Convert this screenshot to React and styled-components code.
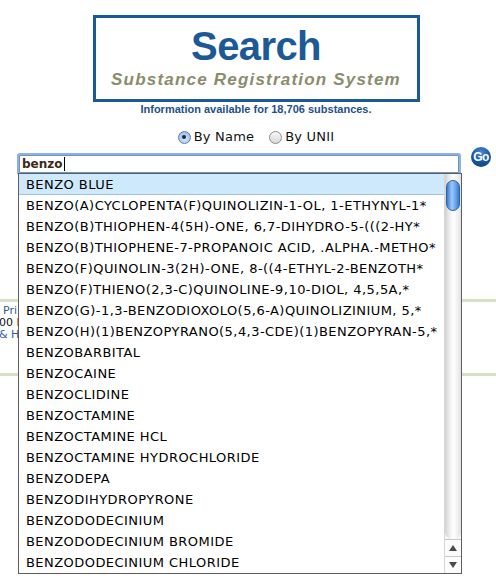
import React from "react";
import styled, { createGlobalStyle } from "styled-components";

const Global = createGlobalStyle`
  html, body { margin: 0; padding: 0; background: #ffffff; overflow: hidden; }
  body { font-family: "DejaVu Sans", Verdana, sans-serif; }
`;

const Page = styled.div`
  position: relative;
  width: 496px;
  height: 584px;
  overflow: hidden;
`;

const Center = styled.div`
  width: 512px;
  display: flex;
  flex-direction: column;
  align-items: center;
`;

const Banner = styled.div`
  margin-top: 15px;
  width: 327px;
  height: 87px;
  box-sizing: border-box;
  border: 3px solid #1b5a96;
  display: flex;
  flex-direction: column;
  align-items: center;
  padding-top: 8px;
`;

const Title = styled.div`
  font-family: "Liberation Sans", Arial, sans-serif;
  font-weight: bold;
  font-size: 40px;
  line-height: 40px;
  letter-spacing: -0.6px;
  color: #1b5a96;
`;

const Subtitle = styled.div`
  margin-top: 4px;
  font-family: "Liberation Sans", Arial, sans-serif;
  font-weight: bold;
  font-style: italic;
  font-size: 17px;
  line-height: 20px;
  letter-spacing: 1.2px;
  color: #8b8c6b;
`;

const Info = styled.div`
  margin-top: 1px;
  font-family: "Liberation Sans", Arial, sans-serif;
  font-weight: bold;
  font-size: 11px;
  line-height: 13px;
  color: #1f4f8a;
`;

const RadioRow = styled.div`
  margin-top: 13px;
  display: flex;
  align-items: center;
  gap: 15px;
  height: 16px;
`;

const RadioLabel = styled.label`
  display: flex;
  align-items: center;
  gap: 3px;
  font-size: 13px;
  line-height: 16px;
  letter-spacing: 0.2px;
  color: #111;
`;

const RadioDot = styled.span`
  position: relative;
  width: 11px;
  height: 11px;
  border-radius: 50%;
  border: 1px solid ${(p) => (p.$on ? "#5d7fa8" : "#8c8c8c")};
  background: ${(p) =>
    p.$on
      ? "radial-gradient(circle at 50% 65%, #d4e6fa 0%, #a9c8ec 60%, #86aedd 100%)"
      : "linear-gradient(#f6f6f6, #d9d9d9)"};
  &::after {
    content: "";
    display: ${(p) => (p.$on ? "block" : "none")};
    position: absolute;
    left: 3.5px;
    top: 3.5px;
    width: 4px;
    height: 4px;
    border-radius: 50%;
    background: #1c2b3c;
  }
`;

const InputRow = styled.div`
  margin-top: 3px;
  padding-left: 19px;
  display: flex;
  align-items: flex-start;
  gap: 12px;
`;

const SearchInput = styled.div`
  margin-top: 7px;
  width: 440px;
  height: 18px;
  box-sizing: border-box;
  border: 1px solid #6f94c4;
  box-shadow: 0 0 0 2px #8db3e4;
  border-radius: 1px;
  background: #fff;
  padding-left: 2px;
  display: flex;
  align-items: center;
  font-weight: bold;
  font-size: 12px;
  color: #3b2a18;
`;

const Caret = styled.span`
  display: inline-block;
  width: 1px;
  height: 14px;
  margin-left: 1px;
  background: #000;
`;

const GoButton = styled.div`
  width: 20px;
  height: 20px;
  margin-top: -1px;
  border-radius: 50%;
  background: radial-gradient(circle at 50% 30%, #4d8ad8 0%, #15569e 55%, #0b3c78 100%);
  display: flex;
  align-items: center;
  justify-content: center;
  font-family: "Liberation Sans", Arial, sans-serif;
  font-weight: bold;
  font-size: 12px;
  letter-spacing: -0.5px;
  color: #fff;
`;

const BackSection = styled.div`
  margin-top: 126px;
  height: 68px;
  border-top: 3px solid #d7e1c3;
  border-bottom: 3px solid #d7e1c3;
  padding-top: 3px;
  box-sizing: content-box;
`;

const BackText = styled.div`
  width: 18px;
  overflow: hidden;
`;

const BackLine = styled.div`
  font-size: 11px;
  line-height: 12px;
  white-space: nowrap;
  color: ${(p) => (p.$blue ? "#2f5d9c" : "#111")};
  margin-left: ${(p) => p.$shift}px;
`;

const Dropdown = styled.div`
  position: absolute;
  left: 18px;
  top: 173px;
  width: 444px;
  height: 401px;
  box-sizing: border-box;
  border: 1px solid #5e5e5e;
  background: #fff;
  display: flex;
`;

const List = styled.div`
  flex: 1;
  overflow: hidden;
`;

const Row = styled.div`
  height: 21px;
  box-sizing: border-box;
  padding-left: 7px;
  font-size: 13px;
  line-height: 21px;
  letter-spacing: 0.45px;
  color: #000;
  white-space: nowrap;
  overflow: hidden;
  background: ${(p) => (p.$active ? "#cde9fb" : "#fff")};
  border-bottom: 1px solid ${(p) => (p.$active ? "#9fc3da" : "transparent")};
`;

const Scrollbar = styled.div`
  width: 16px;
  display: flex;
  flex-direction: column;
  border-left: 1px solid #d6d6d6;
  background: #f7f7f7;
`;

const Track = styled.div`
  flex: 1;
  padding: 6px 1px 0;
  background: linear-gradient(to right, #d2d2d2, #f4f4f4 35%, #ffffff 55%, #e2e2e2);
  border-radius: 0 0 7px 7px;
`;

const Thumb = styled.div`
  height: 31px;
  box-sizing: border-box;
  border-radius: 7px;
  border: 1px solid #2d64b0;
  background: linear-gradient(to right, #3a79d2, #9ec8f6 40%, #7db4f0 60%, #3a7ad6);
`;

const ArrowBtn = styled.div`
  height: 16px;
  border-top: 1px solid #c8c8c8;
  display: flex;
  align-items: center;
  justify-content: center;
  background: #fbfbfb;
`;

const items = [
  "BENZO BLUE",
  "BENZO(A)CYCLOPENTA(F)QUINOLIZIN-1-OL, 1-ETHYNYL-1*",
  "BENZO(B)THIOPHEN-4(5H)-ONE, 6,7-DIHYDRO-5-(((2-HY*",
  "BENZO(B)THIOPHENE-7-PROPANOIC ACID, .ALPHA.-METHO*",
  "BENZO(F)QUINOLIN-3(2H)-ONE, 8-((4-ETHYL-2-BENZOTH*",
  "BENZO(F)THIENO(2,3-C)QUINOLINE-9,10-DIOL, 4,5,5A,*",
  "BENZO(G)-1,3-BENZODIOXOLO(5,6-A)QUINOLIZINIUM, 5,*",
  "BENZO(H)(1)BENZOPYRANO(5,4,3-CDE)(1)BENZOPYRAN-5,*",
  "BENZOBARBITAL",
  "BENZOCAINE",
  "BENZOCLIDINE",
  "BENZOCTAMINE",
  "BENZOCTAMINE HCL",
  "BENZOCTAMINE HYDROCHLORIDE",
  "BENZODEPA",
  "BENZODIHYDROPYRONE",
  "BENZODODECINIUM",
  "BENZODODECINIUM BROMIDE",
  "BENZODODECINIUM CHLORIDE",
];

export default function App() {
  return (
    <Page>
      <Global />
      <Center>
        <Banner>
          <Title>Search</Title>
          <Subtitle>Substance Registration System</Subtitle>
        </Banner>
        <Info>Information available for 18,706 substances.</Info>
        <RadioRow>
          <RadioLabel>
            <RadioDot $on />
            By Name
          </RadioLabel>
          <RadioLabel>
            <RadioDot />
            By UNII
          </RadioLabel>
        </RadioRow>
      </Center>
      <InputRow>
        <SearchInput>
          benzo
          <Caret />
        </SearchInput>
        <GoButton>Go</GoButton>
      </InputRow>
      <BackSection>
        <BackText>
          <BackLine $blue $shift={3}>Pri</BackLine>
          <BackLine $shift={-1}>00 F</BackLine>
          <BackLine $blue $shift={-1}>&amp; Hu</BackLine>
        </BackText>
      </BackSection>
      <Dropdown>
        <List>
          {items.map((t, i) => (
            <Row key={t} $active={i === 0}>
              {t}
            </Row>
          ))}
        </List>
        <Scrollbar>
          <Track>
            <Thumb />
          </Track>
          <ArrowBtn>
            <svg width="8" height="6" viewBox="0 0 8 6">
              <path d="M4 0 L8 6 L0 6 Z" fill="#4a4a4a" />
            </svg>
          </ArrowBtn>
          <ArrowBtn>
            <svg width="8" height="6" viewBox="0 0 8 6">
              <path d="M0 0 L8 0 L4 6 Z" fill="#4a4a4a" />
            </svg>
          </ArrowBtn>
        </Scrollbar>
      </Dropdown>
    </Page>
  );
}
